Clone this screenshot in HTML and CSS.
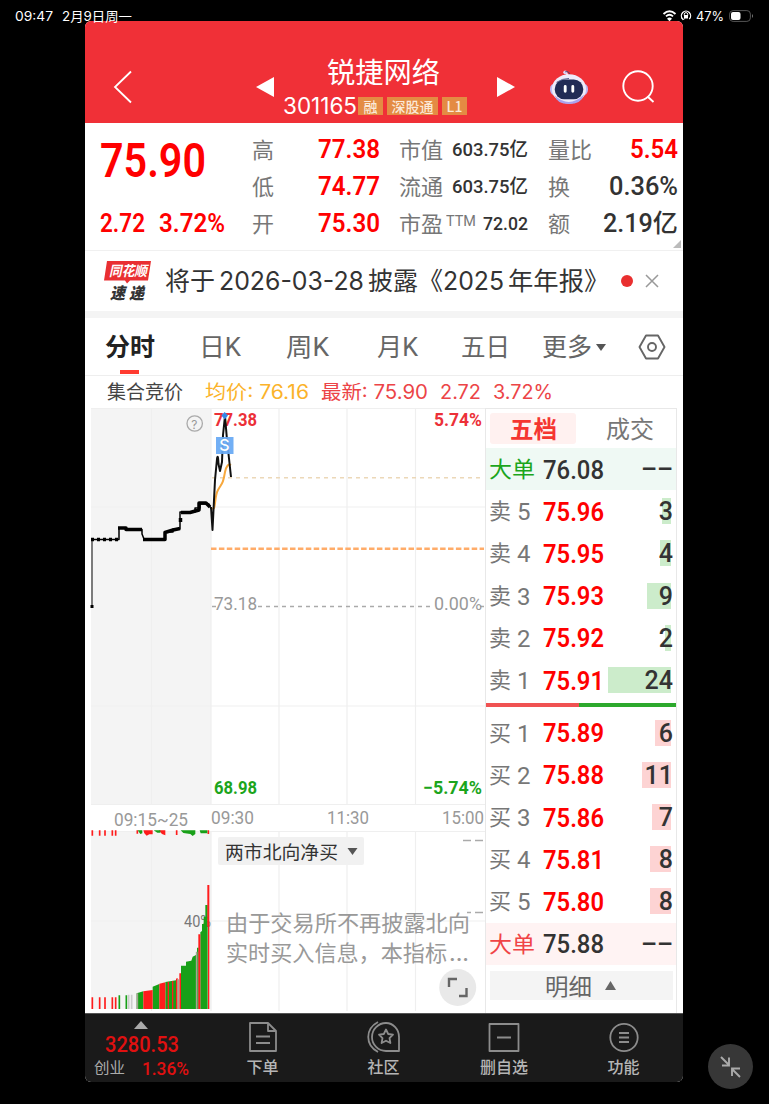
FILE: index.html
```html
<!DOCTYPE html>
<html lang="zh-CN">
<head>
<meta charset="utf-8">
<title>锐捷网络 301165</title>
<link rel="stylesheet" href="styles.css">
</head>
<body>
<header class="status">
  <span class="st" data-w="38">09:47</span><span class="st date" data-w="70">2月9日周一</span>
  <svg class="st-icons" width="34" height="14" viewBox="0 0 34 14" fill="none" stroke="#fff">
    <path d="M1.500 5Q7.500 -.4 13.500 5M4 7.400Q7.500 4.300 11 7.400" stroke-width="1.900"/><path d="M5 9.800Q7.500 7.400 10 9.800L7.500 12.300Z" fill="#fff" stroke="none"/>
    <path d="M20.700 10A4.600 4.600 0 1 1 27.300 10" stroke-width="1.300"/><path d="M19.500 8.500l1.200 2.200 2-1" stroke-width="1"/><path d="M22.300 6.500V5.300a1.700 1.700 0 0 1 3.400 0v1.200" stroke-width="1"/><rect x="22" y="6" width="4" height="3.500" fill="#fff" stroke="none"/>
  </svg>
  <span class="st pct" data-w="28">47%</span>
  <svg width="26" height="14" viewBox="0 0 26 14"><rect x=".6" y="1.600" width="20.800" height="10.800" rx="3.500" fill="none" stroke="#555"/><rect x="2" y="3" width="9.500" height="8" rx="2" fill="#fff"/><path d="M23 5q2 2 0 4z" fill="#777"/></svg>
</header>

<main class="app">
  <section class="head">
    <svg class="back" width="20" height="34" viewBox="0 0 20 34" fill="none" stroke="#fff" stroke-width="1.800"><path d="M18 1.500L2 17 18 32.500"/></svg>
    <svg class="prev" width="18" height="20"><path d="M18 0V20L0 10Z" fill="#fff"/></svg>
    <div class="name">
      <h1><span data-w="113">锐捷网络</span></h1>
      <div class="codes"><span class="code" data-w="74">301165</span><span class="tag t1">融</span><span class="tag t2">深股通</span><span class="tag t3">L1</span></div>
    </div>
    <svg class="next" width="18" height="20"><path d="M0 0V20L18 10Z" fill="#fff"/></svg>
    <svg class="robot" width="38" height="36" viewBox="0 0 40 36"><path d="M20 8L17 3" stroke="#f1e8f6" stroke-width="2"/><circle cx="16" cy="2.500" r="2" fill="#ddd4f3"/><path d="M16 2q4-1 5 3" stroke="#4a4277" fill="none"/><rect x="0" y="14" width="40" height="13" rx="6" fill="#bdb9f5"/><ellipse cx="20" cy="20" rx="18" ry="15.500" fill="#eeebfa"/><path d="M5 27q15 14 31-1-3 10-16 10T5 27" fill="#aaa3ed"/><rect x="5" y="10" width="30" height="21" rx="10" fill="#222b55"/><path d="M7 13q6-4 13-4" stroke="#515a88" fill="none"/><path d="M16 17.500v5M24 17.500v5" stroke="#fff" stroke-width="3" stroke-linecap="round"/></svg>
    <svg class="search" width="34" height="34" viewBox="0 0 34 34" fill="none" stroke="#fff" stroke-width="1.900"><circle cx="16" cy="16" r="14.700"/><path d="M25.500 26.500L31.500 32"/></svg>
  </section>

  <section class="quote">
    <div class="main-price">
      <div class="price"><b data-w="106">75.90</b></div>
      <div class="change"><b data-w="45">2.72</b><b data-w="66">3.72%</b></div>
    </div>
    <dl class="q1">
      <dt>高</dt><dd class="red"><b data-w="62">77.38</b></dd>
      <dt>低</dt><dd class="red"><b data-w="62">74.77</b></dd>
      <dt>开</dt><dd class="red"><b data-w="62">75.30</b></dd>
    </dl>
    <dl class="q2">
      <dt>市值</dt><dd><b data-w="76">603.75亿</b></dd>
      <dt>流通</dt><dd><b data-w="76">603.75亿</b></dd>
      <dt>市盈<sup data-w="30">TTM</sup></dt><dd><b data-w="45">72.02</b></dd>
    </dl>
    <dl class="q3">
      <dt>量比</dt><dd class="red"><b data-w="48">5.54</b></dd>
      <dt>换</dt><dd><b data-w="69">0.36%</b></dd>
      <dt>额</dt><dd><b data-w="75">2.19亿</b></dd>
    </dl>
    <svg class="corner" width="8" height="8"><path d="M8 0V8H0Z" fill="#bbb"/></svg>
  </section>

  <section class="notice">
    <div class="logo"><div class="lg1"><svg width="48" height="23" viewBox="0 0 48 23"><path d="M3 0H47L44 19.500H26l-3 3-2-3H0Z" fill="#e92f32"/></svg><span data-w="38">同花顺</span></div><div class="lg2"><span data-w="15">速</span><span data-w="15">递</span></div></div>
    <span class="msg"><span data-w="50">将于</span><span class="dt" data-w="145">2026-03-28</span><span data-w="50">披露</span><span class="bk" data-w="25">《</span><span class="yr" data-w="61">2025</span><span data-w="76">年年报</span><span class="bk2" data-w="25">》</span></span>
    <i class="dot"></i>
    <svg class="close" width="14" height="14"><path d="M1 1L13 13M13 1L1 13" stroke="#999" stroke-width="1.500"/></svg>
  </section>

  <nav class="tabs">
    <span class="tab on"><span data-w="50">分时</span></span>
    <span class="tab"><span data-w="42">日K</span></span>
    <span class="tab"><span data-w="43">周K</span></span>
    <span class="tab"><span data-w="41">月K</span></span>
    <span class="tab"><span data-w="49">五日</span></span>
    <span class="tab"><span data-w="50">更多</span><svg width="10" height="8"><path d="M0 0H10L5 7Z" fill="#555"/></svg></span>
    <svg class="gear" width="28" height="26" viewBox="0 0 28 26" fill="none" stroke="#666" stroke-width="1.900"><path d="M8 1.500H20L26.500 13 20 24.500H8L1.500 13Z" stroke-linejoin="round"/><circle cx="14" cy="13" r="4"/></svg>
  </nav>

  <section class="legend">
    <span class="l0" data-w="76">集合竞价</span><span class="l1" data-w="104">均价: 76.16</span><span class="l2" data-w="107">最新: 75.90</span><span class="l3" data-w="41">2.72</span><span class="l4" data-w="60">3.72%</span>
  </section>

  <section class="body">
    <svg class="chart" width="399" height="604" viewBox="86 408 399 604">
      <rect x="91" y="408" width="120" height="397" fill="#f4f4f4"/><rect x="91" y="831" width="120" height="178" fill="#f4f4f4"/>
      <g stroke="#efefef" stroke-width="1.200" fill="none"><path d="M91 408.500H485M91 507H485M91 706H485M91 804.500H485M91 831.500H485M91 921H485M151.500 408V804M151.500 831V1011M211 831V1011M279 408V804M279 831V1011M347 408V804M347 831V1011M415.500 408V804M415.500 831V1011M211 408V804"/></g>
      <path d="M212 477.700H484" stroke="#ecd8b8" stroke-width="1.500" stroke-dasharray="4 4"/>
      <path d="M211 548.700H484" stroke="#ffac69" stroke-width="2.400" stroke-dasharray="5.500 2.400"/>
      <path d="M212 606.500H216M258 606.500H434M480 606.500H484" stroke="#aaa" stroke-width="1.500" stroke-dasharray="4 4"/>
      <g class="axis">
        <text x="214" y="426" textLength="43" fill="#ec3038" font-weight="700">77.38</text>
        <text x="434" y="426" textLength="48" fill="#ec3038" font-weight="700">5.74%</text>
        <text x="214" y="610" textLength="43" fill="#999">73.18</text>
        <text x="434" y="610" textLength="48" fill="#999">0.00%</text>
        <text x="214" y="794" textLength="43" fill="#1ca51c" font-weight="700">68.98</text>
        <text x="423" y="794" textLength="59" fill="#1ca51c" font-weight="700">−5.74%</text>
        <text x="114" y="825.500" textLength="74" fill="#999">09:15~25</text>
        <text x="211" y="824" textLength="43" fill="#999">09:30</text>
        <text x="327" y="824" textLength="42" fill="#999">11:30</text>
        <text x="442" y="824" textLength="42" fill="#999">15:00</text>
      </g>
      <circle cx="194.700" cy="423.500" r="7.700" fill="none" stroke="#aaa" stroke-width="1.300"/><text x="191.300" y="428.500" class="help">?</text>
      <g fill="none" stroke-linejoin="round">
        <path d="M92 606V539.500" stroke="#555" stroke-width="1.500"/>
        <path d="M91 539.500H119V528H126V529.500H142V534L144 539H165V532H173V529H180V512H195V508H200V504H209L211 509" stroke="#000" stroke-width="1.500"/>
        <path d="M91 539.500H118" stroke="#000" stroke-width="3.500" stroke-dasharray="3 3"/>
        <path d="M118 528H126V529.500H142M143 539.500H165V532.500L173 530 180 528.500M180.500 522V518M181 512.500H190L199 510V503H206L210 507" stroke="#000" stroke-width="3.500"/>
        <path d="M92 605v3" stroke="#000" stroke-width="3"/>
        <path d="M212 508C216 512 214 497 218 490S223 484 225 472Q227 463 231 465" stroke="#f7a83d" stroke-width="2"/>
        <path d="M211 507L212.500 530 215 480 217 459Q218 453 218.500 464L220 471 222 462 223 435 225 416 227 440 231 477" stroke="#111" stroke-width="2"/>
      </g>
      <rect x="216" y="437" width="17.500" height="17" fill="#67a9f4" opacity=".93"/><text x="219.300" y="451" class="s">S</text><path d="M224.700 412l3.300 3.500-3.300 4-3.300-4z" fill="#3687e5"/>
      <text x="184" y="927" class="forty" textLength="27">40%</text>
      <g transform="translate(80 700) scale(.33333)" fill="none" stroke-width="5">
        <path stroke="#ff1c1c" d="M37 892V927M59 892V927M75 892V927M97 892V927M107 892V927"/>
        <path stroke="#18a018" d="M118 886V927M139 886V927"/>
        <path stroke="#ccc" d="M146 884V927M155 884V927"/>
        <path fill="#18a018" stroke="none" d="M170 880L190 874V927H170ZM218 860L238 852V927H218ZM256 846L288 841V927H256ZM303 797H318V785L334 782 338 770 348 765V927H303ZM351 743H356V927H351ZM361 697L366 693V672H371V650H376V615H383V927H361Z"/>
        <path fill="#ff1c1c" stroke="none" d="M190 874L218 870V927H190ZM238 851L256 847V927H238ZM263 846H267V927H263ZM276 843H280V927H276ZM288 836L293 834V927H288ZM298 820H303V927H298ZM355 703H361V927H355ZM382 555H388V680H382ZM384 680H388V927H384Z"/>
        <path stroke="#a5a593" d="M172 880V927M295 838V927M350 755V927"/>
        <path stroke="#ff1c1c" d="M37 391V407M59 391V407M75 391V407M97 391V407M107 391V407M172 391V401M290 391V405M385 391V402"/>
        <path fill="#ff1c1c" stroke="none" d="M190 391H218V403H208L200 407 193 400ZM236 391H256V406L246 402Z"/>
        <path fill="#18a018" stroke="none" d="M173 391H187V400L181 402ZM221 391H241V398H232ZM302 391H346V402L338 408 331 402 310 399ZM359 391H382V400H362Z"/>
      </g>
      <rect x="218" y="837" width="146" height="28" rx="2" fill="#f1f1f1"/>
      <text x="225" y="858.500" textLength="113" class="drop">两市北向净买</text><path d="M347.500 848H357.500L352.500 855Z" fill="#555"/>
      <path d="M463 840.500H471M475 840.500H483M467 912.500H471M475 912.500H483" stroke="#aaa" stroke-width="1.500"/>
      <g class="info"><text x="226" y="930.500" textLength="244">由于交易所不再披露北向</text><text x="226" y="961" textLength="221">实时买入信息，本指标</text><text x="449" y="961" textLength="20">...</text></g>
      <circle cx="457.700" cy="987.500" r="18.500" fill="#e9e9e9"/><path d="M449 987V979H457M459 996H466.500V988" fill="none" stroke="#666" stroke-width="2.400"/>
    </svg>

    <aside class="book">
      <div class="btabs"><b><span data-w="47">五档</span></b><span class="deal"><span data-w="48">成交</span></span></div>
      <div class="row big sellbig"><span class="lv"><span data-w="46">大单</span></span><b data-w="61">76.08</b><span class="vol">––</span></div>
      <div class="row"><span class="lv">卖<i>5</i></span><b data-w="61">75.96</b><span class="vol">3<u style="width:9px"></u></span></div>
      <div class="row"><span class="lv">卖<i>4</i></span><b data-w="61">75.95</b><span class="vol">4<u style="width:11px"></u></span></div>
      <div class="row"><span class="lv">卖<i>3</i></span><b data-w="61">75.93</b><span class="vol">9<u style="width:24px"></u></span></div>
      <div class="row"><span class="lv">卖<i>2</i></span><b data-w="61">75.92</b><span class="vol">2<u style="width:6px"></u></span></div>
      <div class="row"><span class="lv">卖<i>1</i></span><b data-w="61">75.91</b><span class="vol">24<u style="width:63px"></u></span></div>
      <div class="ratio"><i></i></div>
      <div class="row buy"><span class="lv">买<i>1</i></span><b data-w="61">75.89</b><span class="vol">6<u style="width:16px"></u></span></div>
      <div class="row buy"><span class="lv">买<i>2</i></span><b data-w="61">75.88</b><span class="vol">11<u style="width:29px"></u></span></div>
      <div class="row buy"><span class="lv">买<i>3</i></span><b data-w="61">75.86</b><span class="vol">7<u style="width:19px"></u></span></div>
      <div class="row buy"><span class="lv">买<i>4</i></span><b data-w="61">75.81</b><span class="vol">8<u style="width:21px"></u></span></div>
      <div class="row buy"><span class="lv">买<i>5</i></span><b data-w="61">75.80</b><span class="vol">8<u style="width:21px"></u></span></div>
      <div class="row big buybig"><span class="lv"><span data-w="46">大单</span></span><b data-w="61">75.88</b><span class="vol">––</span></div>
      <div class="detail"><span data-w="47">明细</span><svg width="11" height="9"><path d="M5.500 0L11 9H0Z" fill="#666"/></svg></div>
    </aside>
  </section>

  <footer class="bar">
    <div class="index"><svg width="14" height="8"><path d="M7 0L14 8H0Z" fill="#aaa"/></svg><div class="iv"><b data-w="74">3280.53</b></div><div class="ip"><span data-w="31">创业</span><b data-w="47">1.36%</b></div></div>
    <div class="item"><svg width="30" height="32" viewBox="0 0 30 32"><path d="M2 2H20L28 10V30H2ZM20 2V10H28M8 15.500H22M8 22H22"/></svg><span>下单</span></div>
    <div class="item"><svg width="34" height="32" viewBox="0 0 34 32"><path d="M11 1C-2 8-2 24 11 31M19 2A14 14 0 1 0 19 30H32V16A13 14 0 0 0 19 2ZM19 8.500L21.200 13 26 13.700 22.500 17.200 23.400 22 19 19.700 14.600 22 15.500 17.200 12 13.700 16.800 13Z"/></svg><span>社区</span></div>
    <div class="item"><svg width="32" height="32" viewBox="0 0 32 32"><path d="M1.500 3H30.500V30H1.500ZM9 16.500H23"/></svg><span>删自选</span></div>
    <div class="item"><svg width="32" height="32" viewBox="0 0 32 32"><circle cx="16" cy="16.500" r="13.700"/><path d="M11 12H21M11 16.500H21M11 21H21"/></svg><span>功能</span></div>
  </footer>
</main>
<button class="shrink" aria-label="缩小"><svg width="22" height="24" viewBox="0 0 22 24" fill="none" stroke="#aaa" stroke-width="1.900"><path d="M1 2L9 10M9 2.500V10.500H2M20 22L12 14M12 21V13.500H20"/></svg></button>
<script src="fit.js"></script>
</body>
</html>
```
FILE: styles.css
```css
* { box-sizing: border-box; }
body { margin: 0; height: 1107px; background: linear-gradient(#000 1103.5px, #fff 1104.5px); font-family: Roboto, "Noto Sans CJK SC", sans-serif; line-height: 1; color: #333; position: relative; overflow: hidden; }
h1, dl, dd { margin: 0; }
i { font-style: normal; }
svg { display: block; flex: none; }
[data-w] { display: inline-block; white-space: nowrap; justify-self: start; }
.status { height: 21px; padding: 9px 14px 0 15px; display: flex; align-items: flex-start; color: #fff; font: 13px/14px Inter, "Noto Sans CJK SC", sans-serif; position: relative; z-index: 1; }
.date { margin-left: 9px; }
.st-icons { margin-left: auto; }
.pct { margin: 0 5px 0 0; }

.app { width: 598px; margin-left: 85px; background: #fff; border-radius: 6px; overflow: hidden; }
.head { height: 102px; background: #f03037; color: #fff; display: flex; align-items: flex-start; padding-left: 28px; }
.back { margin-top: 49px; }
.prev { margin: 56px 0 0 123px; }
.name { width: 186px; margin-left: 8px; margin-top: 34px; }
h1 { font: 400 28px/32px "Noto Sans CJK SC", sans-serif; margin-left: 45px; }
.codes { display: flex; align-items: center; margin: 10px 0 0 1px; height: 18px; }
.code { font: 23px/18px Inter, sans-serif; }
.tag { background: #e48b43; color: #fbe9d8; font: 500 14px/18px "Noto Sans CJK SC", sans-serif; height: 18px; text-align: center; }
.t1 { width: 25px; margin-left: 1px; }
.t2 { width: 51px; margin-left: 4px; }
.t3 { width: 25px; margin-left: 4px; }
.next { margin: 56px 0 0 29px; }
.robot { margin: 48px 0 0 35px; }
.search { margin: 49px 0 0 34px; }

.quote { height: 128px; padding: 8px 0 0 15px; display: flex; border-bottom: 1px solid #f0f0f0; }
.main-price { width: 126px; color: #f00; }
.price { height: 74px; display: flex; align-items: center; margin-top: -7px; font-size: 48px; }
.price b, .change b { font-weight: 600; }
.change { height: 37px; margin-top: 7px; display: flex; align-items: center; font-size: 25px; gap: 14px; }
dl { display: grid; grid-auto-rows: 37px; align-items: center; align-content: start; }
dt { color: #777; font-size: 22px; white-space: nowrap; display: flex; padding-top: 2px; }
dd { display: flex; justify-content: flex-end; color: #333; }
dd.red { color: #f00; }
dd b { font-weight: 600; font-size: 25px; }
.q1 { width: 128px; margin-left: 26px; grid-template-columns: 30px 98px; }
.q2 { width: 129px; margin-left: 19px; grid-template-columns: 48px 81px; }
.q2 dt { width: 48px; }
.q2 dd b { font-size: 19px; font-weight: 500; }
.q3 { width: 130px; margin-left: 20px; grid-template-columns: 46px 84px; }
.q3 dd:not(.red) b { font-weight: 500; }
sup { font-size: 15px; line-height: 1; margin-left: 3px; }
.corner { align-self: flex-end; margin: 0 0 2px -5px; }

.notice { height: 67px; border-bottom: 7px solid #f4f4f4; display: flex; align-items: center; padding-left: 19px; }
.logo { width: 50px; height: 40px; }
.lg1 { display: grid; height: 22px; font: 700 14px/19px "Noto Sans CJK SC", sans-serif; color: #fff; font-style: italic; }
.lg1 > * { grid-area: 1 / 1; }
.lg1 > span { margin-left: 5px; }
.lg2 { display: flex; gap: 4px; padding-left: 6px; font: italic 900 16px/18px "Noto Sans CJK SC", sans-serif; color: #333; }
.msg { margin-left: 11px; width: 436px; display: flex; font: 25px/34px Inter, "Noto Sans CJK SC", sans-serif; color: #333; }
.dt { margin-left: 4px; }
.dt + span { margin-left: 4px; }
.yr + span { margin-left: 4px; }
.dot { width: 12px; height: 12px; border-radius: 50%; background: #e92f2f; margin-left: 20px; }
.close { margin-left: 12px; }

.tabs { height: 58px; border-bottom: 1px solid #eee; display: grid; grid-template-columns: 94px 87px 91px 84px 81px 96px 40px; padding-left: 20px; font: 25px/56px Roboto, "Noto Sans CJK SC", sans-serif; color: #666; }
.tab { height: 57px; display: flex; align-items: center; padding-top: 2px; }
.tab svg { margin-left: 4px; }
.tab.on { color: #222; font-weight: 700; background: linear-gradient(#ff3b30, #ff3b30) 15px 52px / 19px 4px no-repeat; }
.gear { align-self: center; }
.legend { height: 32px; display: flex; align-items: center; padding-left: 22px; font: 19.500px/32px Inter, "Noto Sans CJK SC", sans-serif; color: #ec4447; }
.l0 { color: #444; }
.l1 { color: #fbb32a; margin-left: 22px; }
.l2, .l3, .l4 { margin-left: 12px; }

.body { height: 605px; display: flex; padding-left: 1px; }
.axis text { font-size: 18.500px; font-family: Roboto, sans-serif; }
.help { font: 12px Inter, sans-serif; fill: #999; }
.s { font: 500 16px Inter, sans-serif; fill: #fff; }
.forty { font: 16px Roboto, sans-serif; fill: #777; }
.drop { font: 18.500px "Noto Sans CJK SC", sans-serif; fill: #333; }
.info { font: 22px "Noto Sans CJK SC", sans-serif; fill: #999; }

.book { width: 192px; border: solid #e8e8e8; border-width: 1px 1px 0; }
.btabs { height: 39px; display: flex; align-items: flex-start; font: 24px/30px "Noto Sans CJK SC", sans-serif; }
.btabs b { width: 86px; height: 31px; margin: 4px 0 0 4px; background: #fff1f0; color: #f53631; text-align: center; border-radius: 3px; }
.deal { color: #777; margin: 4px 0 0 30px; }
.row { height: 42.200px; padding: 2px 3px 0 3px; display: grid; grid-template-columns: 54px 62px 1fr; align-items: center; font-size: 25px; }
.lv { font-size: 22px; color: #777; display: flex; align-items: center; }
.lv i { font-size: 24px; margin-left: 6px; }
.row b { font-weight: 600; color: #f00; }
.vol { position: relative; z-index: 0; text-align: right; font-weight: 500; line-height: 26px; height: 26px; }
.vol u { position: absolute; z-index: -1; right: 2px; top: -1px; height: 26px; background: #cceccb; }
.buy u { background: #fdd3d3; }
.row.big b { color: #333; font-weight: 500; }
.sellbig { background: #eff9f4; }
.sellbig .lv { color: #1ca51c; }
.buybig { background: #fff3f3; }
.buybig .lv { color: #f04446; }
.ratio { height: 3.500px; margin: 2px 0 5px; background: #2da92d; }
.ratio i { display: block; width: 93px; height: 100%; background: #f05252; }
.detail { height: 29px; margin: 6px 3px 0 4px; background: #f4f4f4; display: flex; align-items: center; padding-left: 55px; gap: 13px; font: 23px/29px "Noto Sans CJK SC", sans-serif; color: #666; }

.bar { height: 69px; background: #1a1a1a; border-top: 1px solid #555; display: grid; grid-template-columns: 117px 121px 121px 120px 119px; color: #b5b5b5; }
.index { padding: 7px 0 0 9px; color: #aaa; }
.index > svg { margin-left: 40px; }
.iv { margin: 3px 0 0 11px; font-size: 22.500px; line-height: 24px; color: #e01010; }
.iv b, .ip b { font-weight: 500; }
.ip { display: flex; gap: 17px; font-size: 15px; line-height: 25px; }
.ip b { font-size: 19px; color: #e01010; }
.item { padding-top: 7px; display: flex; flex-direction: column; align-items: center; font: 500 16px/20px "Noto Sans CJK SC", sans-serif; gap: 3px; }
.item svg { fill: none; stroke: #8c8c8c; stroke-width: 1.800; stroke-linejoin: round; }
.shrink { position: absolute; left: 708px; top: 1044px; width: 45px; height: 45px; padding: 0; border: 0; border-radius: 50%; background: #373737; display: flex; align-items: center; justify-content: center; }
```
FILE: fit.js
```js
// Condense or widen each label to its nominal width.
document.querySelectorAll('[data-w]').forEach(function (el) {
  var target = parseFloat(el.dataset.w);
  el.style.flex = 'none';
  var natural = el.getBoundingClientRect().width;
  el.style.width = target + 'px';
  var inner = document.createElement('span');
  inner.style.display = 'inline-block';
  inner.style.transformOrigin = '0 50%';
  inner.style.transform = 'scaleX(' + target / natural + ')';
  while (el.firstChild) inner.appendChild(el.firstChild);
  el.appendChild(inner);
});
document.querySelectorAll('svg text[textLength]').forEach(function (t) {
  t.setAttribute('lengthAdjust', 'spacingAndGlyphs');
});
```
